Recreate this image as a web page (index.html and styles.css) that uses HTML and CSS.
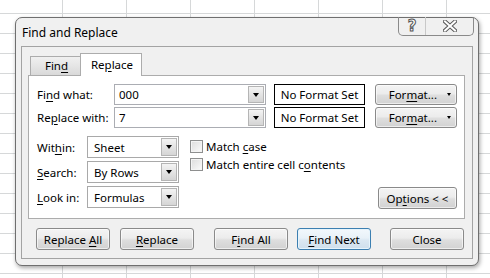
FILE: index.html
```html
<!DOCTYPE html>
<html lang="en">
<head>
    <meta charset="UTF-8">
    <title>Find and Replace</title>
    <link rel="stylesheet" href="styles.css">
</head>
<body>
    <div class="desktop">
        <div class="dialog">
            <div class="titlebar">
                <span class="title">Find and Replace</span>
                <div class="caption-buttons">
                    <span class="cap-btn help">?</span>
                    <span class="cap-btn close">
                        <svg width="14" height="12" viewBox="0 0 14 12">
                            <path d="M2 1.5 L12 10.5 M12 1.5 L2 10.5" stroke="#5a5a5a" stroke-width="4" stroke-linecap="square"/>
                            <path d="M2 1.5 L12 10.5 M12 1.5 L2 10.5" stroke="#ffffff" stroke-width="2" stroke-linecap="square"/>
                        </svg>
                    </span>
                </div>
            </div>

            <div class="client">
                <div class="tabs">
                    <div class="tab">Fin<u>d</u></div>
                    <div class="tab active">Re<u>p</u>lace</div>
                </div>

                <div class="tab-page">
                    <div class="row">
                        <span class="lbl wide">Fi<u>n</u>d what:</span>
                        <div class="combo text-combo">
                            <span class="val">000</span>
                            <span class="arrow"></span>
                        </div>
                        <div class="format-box">No Format Set</div>
                        <button class="btn format"><span>For<u>m</u>at...</span><span class="caret"></span></button>
                    </div>
                    <div class="row">
                        <span class="lbl wide">Re<u>p</u>lace with:</span>
                        <div class="combo text-combo">
                            <span class="val">7</span>
                            <span class="arrow"></span>
                        </div>
                        <div class="format-box">No Format Set</div>
                        <button class="btn format"><span>For<u>m</u>at...</span><span class="caret"></span></button>
                    </div>

                    <div class="options-area">
                        <div class="selects">
                            <div class="sel-row">
                                <span class="lbl">Wit<u>h</u>in:</span>
                                <div class="combo list-combo"><span class="val">Sheet</span><span class="arrow"></span></div>
                            </div>
                            <div class="sel-row">
                                <span class="lbl"><u>S</u>earch:</span>
                                <div class="combo list-combo"><span class="val">By Rows</span><span class="arrow"></span></div>
                            </div>
                            <div class="sel-row">
                                <span class="lbl"><u>L</u>ook in:</span>
                                <div class="combo list-combo"><span class="val">Formulas</span><span class="arrow"></span></div>
                            </div>
                        </div>

                        <div class="checks">
                            <label class="check"><span class="box"></span><span>Match <u>c</u>ase</span></label>
                            <label class="check"><span class="box"></span><span>Match entire cell c<u>o</u>ntents</span></label>
                        </div>

                        <button class="btn options">Op<u>t</u>ions &lt; &lt;</button>
                    </div>
                </div>

                <div class="actions">
                    <button class="btn act replace-all">Replace <u>A</u>ll</button>
                    <button class="btn act replace"><u>R</u>eplace</button>
                    <button class="btn act find-all">F<u>i</u>nd All</button>
                    <button class="btn act find-next"><u>F</u>ind Next</button>
                    <button class="btn act close-btn">Close</button>
                </div>
            </div>
        </div>
    </div>
</body>
</html>
```

FILE: styles.css
```css
* {
    box-sizing: border-box;
}
body {
    margin: 0;
    width: 490px;
    height: 278px;
    overflow: hidden;
    font-family: 'Noto Sans', 'Open Sans', sans-serif;
    font-size: 11.5px;
    color: #000;
    background-color: #ffffff;
    /* spreadsheet grid behind the dialog */
    background-image:
        linear-gradient(to right, #d6d8d9 1px, transparent 1px),
        linear-gradient(to bottom, #d6d8d9 1px, transparent 1px);
    background-size: 64px 20px;
    background-position: 62px 13px;
}
u {
    text-decoration: underline;
    text-underline-offset: 2px;
}
.desktop {
    padding: 17px 0 0 15px;
}
.dialog {
    width: 464px;
    height: 249px;
    border: 1px solid #6f6f6f;
    border-radius: 7px;
    background: #f0f0f0;
    box-shadow: 1px 2px 4px rgba(0, 0, 0, 0.35);
    padding: 0 5px;
}

/* title bar */
.titlebar {
    height: 28px;
    display: flex;
    justify-content: space-between;
    align-items: flex-start;
}
.title {
    padding: 6px 0 0 1px;
    font-size: 12px;
}
.caption-buttons {
    display: flex;
    margin-top: -1px;
    margin-right: -1px;
    height: 19px;
    border: 1px solid #8a8a8a;
    border-top: none;
    border-radius: 0 0 5px 5px;
}
.cap-btn {
    display: flex;
    align-items: center;
    justify-content: center;
}
.cap-btn.help {
    width: 27px;
    border-right: 1px solid #c8c8c8;
    font-family: 'DejaVu Sans', sans-serif;
    font-size: 15px;
    font-weight: bold;
    color: #fff;
    -webkit-text-stroke: 1px #555;
}
.cap-btn.close {
    width: 47px;
}

/* client area */
.client {
    height: 213px;
    border: 1px solid #a3a3a3;
    background: #f0f0f0;
    padding-top: 6px;
}
.tabs {
    display: flex;
    align-items: flex-end;
    height: 22px;
    margin-left: 8px;
    position: relative;
    z-index: 1;
}
.tab {
    width: 51px;
    height: 19px;
    border: 1px solid #acacac;
    border-bottom: none;
    background: linear-gradient(#f0f0f0, #e5e5e5 50%, #d9d9d9);
    text-align: center;
    line-height: 18px;
    padding-left: 2px;
}
.tab.active {
    width: 62px;
    height: 23px;
    margin-left: -1px;
    margin-bottom: -1px;
    background: #ffffff;
    line-height: 21px;
}
.tab-page {
    margin: 0 7px 0 6px;
    height: 144px;
    border: 1px solid #acacac;
    background: #ffffff;
    padding: 8px 7px 0 8px;
}
.row {
    display: flex;
    align-items: center;
    height: 21px;
    margin-bottom: 2px;
}
.lbl {
    width: 50px;
    flex: none;
}
.lbl.wide {
    width: 77px;
}

/* combo boxes */
.combo {
    display: flex;
    align-items: stretch;
    border: 1px solid #abadb3;
    background: #fff;
    padding: 1px;
}
.combo .val {
    flex: 1;
    display: flex;
    align-items: center;
    padding-left: 3px;
}
.text-combo {
    width: 152px;
    height: 21px;
}
.list-combo {
    width: 92px;
    height: 22px;
    border-color: #a9a9a9;
}
.list-combo .val {
    padding-left: 5px;
}
.arrow {
    width: 16px;
    border: 1px solid #b5b5b5;
    background: linear-gradient(#f4f4f4, #e4e4e4 50%, #d5d5d5);
    position: relative;
}
.arrow::after {
    content: "";
    position: absolute;
    left: 4px;
    top: 50%;
    margin-top: -2px;
    border-left: 3.5px solid transparent;
    border-right: 3.5px solid transparent;
    border-top: 4px solid #000;
}
.format-box {
    width: 91px;
    height: 21px;
    margin-left: 8px;
    border: 1px solid #000;
    display: flex;
    align-items: center;
    justify-content: center;
}

/* buttons */
.btn {
    font-family: inherit;
    font-size: 11.5px;
    color: #000;
    height: 22px;
    padding: 0;
    border: 1px solid #8a8a8a;
    border-radius: 3px;
    background: linear-gradient(#f4f4f4, #ececec 45%, #dedede 55%, #d2d2d2);
    box-shadow: inset 0 0 0 1px rgba(255, 255, 255, 0.6);
}
.btn.format {
    margin-left: auto;
    width: 82px;
    height: 21px;
    display: flex;
    align-items: center;
    justify-content: flex-end;
    padding-right: 5px;
}
.caret {
    display: inline-block;
    margin-left: 10px;
    border-left: 2.5px solid transparent;
    border-right: 2.5px solid transparent;
    border-top: 3px solid #000;
}

/* lower options */
.options-area {
    display: flex;
    margin-top: 8px;
}
.sel-row {
    display: flex;
    align-items: center;
    margin-bottom: 3px;
}
.checks {
    margin-left: 11px;
    padding-top: 4px;
}
.check {
    display: flex;
    align-items: center;
    height: 13px;
    margin-bottom: 5px;
}
.box {
    width: 13px;
    height: 13px;
    margin-right: 3px;
    border: 1px solid #8e8f8f;
    background: linear-gradient(135deg, #dcdcdc, #fbfbfb);
    box-shadow: inset 0 0 0 1px #f4f4f4;
}
.btn.options {
    margin-left: auto;
    align-self: flex-end;
    width: 79px;
    margin-bottom: 2px;
}

/* bottom buttons */
.actions {
    display: flex;
    padding: 9px 0 0 14px;
}
.btn.act {
    width: 74px;
}
.replace {
    margin-left: 10px;
}
.find-all {
    margin-left: 20px;
}
.find-next {
    margin-left: 9px;
    border-color: #3c7fb1;
    background: linear-gradient(#f2f8fc, #e8f1f8 45%, #dbe8f2 55%, #cfdfec);
    box-shadow: inset 0 0 0 1px #e6f4fc;
}
.close-btn {
    margin-left: 19px;
}
```
